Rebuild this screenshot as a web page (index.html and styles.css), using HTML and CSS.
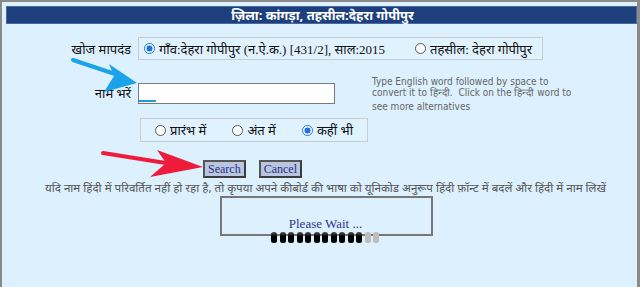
FILE: index.html
```html
<!DOCTYPE html>
<html lang="hi">
<head>
<meta charset="utf-8">
<title>नाम खोज</title>
<link rel="stylesheet" href="styles.css">
</head>
<body>
<div class="page">
  <div class="header">ज़िला: कांगड़ा, तहसील:देहरा गोपीपुर</div>
  <div class="form">
    <div class="row row1">
      <div class="label">खोज मापदंड</div>
      <div class="box box1">
        <label class="opt"><span class="radio on"></span>गाँव:देहरा गोपीपुर (न.ऐ.क.) [431/2], साल:2015</label>
        <label class="opt opt2"><span class="radio"></span>तहसील: देहरा गोपीपुर</label>
      </div>
    </div>
    <div class="row row2">
      <div class="label">नाम भरें</div>
      <div class="inputwrap"><div class="input"><span class="ime"></span></div></div>
      <div class="help">Type English word followed by space to<br>convert it to हिन्दी.&nbsp; Click on the हिन्दी word to<br><span class="l3">see more alternatives</span></div>
    </div>
    <div class="row row3">
      <div class="label"></div>
      <div class="box box3">
        <label class="opt"><span class="radio"></span>प्रारंभ में</label>
        <label class="opt"><span class="radio"></span>अंत में</label>
        <label class="opt"><span class="radio on"></span>कहीं भी</label>
      </div>
    </div>
    <div class="buttons">
      <button class="btn">Search</button>
      <button class="btn">Cancel</button>
    </div>
    <div class="note">यदि नाम हिंदी में परिवर्तित नहीं हो रहा है, तो कृपया अपने कीबोर्ड की भाषा को यूनिकोड अनुरूप हिंदी फ़ॉन्ट में बदलें और हिंदी में नाम लिखें</div>
    <div class="wait">
      <div class="waittext">Please Wait ...</div>
      <div class="progress">
        <i></i><i></i><i></i><i></i><i></i><i></i><i></i><i></i><i></i><i></i><i></i><i class="off"></i><i class="off"></i>
      </div>
    </div>
  </div>
  <svg class="arrows" width="640" height="287" viewBox="0 0 640 287">
    <line x1="73" y1="60" x2="118" y2="75" stroke="#1aa3e8" stroke-width="4" stroke-linecap="round"/>
    <polygon points="137,83 109,64 114,76 104,92" fill="#1aa3e8"/>
    <line x1="103" y1="153" x2="172" y2="164" stroke="#ee1c3a" stroke-width="4" stroke-linecap="round"/>
    <polygon points="203,167 157,150 166,163 150,177" fill="#ee1c3a"/>
  </svg>
</div>
</body>
</html>
```
FILE: styles.css
```css
html, body {
  margin: 0;
  padding: 0;
  background: #dcf0fe;
}
body {
  width: 640px;
  height: 287px;
  overflow: hidden;
}
.page {
  position: relative;
  box-sizing: border-box;
  width: 640px;
  height: 287px;
  border-top: 2px solid #8a8a8a;
  border-left: 2px solid #8a8a8a;
  border-right: 3px solid #8a8a8a;
  background: #dcf0fe;
  padding: 4px 0 0 4px;
  font-family: "Noto Sans", "DejaVu Sans", sans-serif;
}
.header {
  box-sizing: border-box;
  height: 18px;
  background: #1e3f7e;
  border: 1px solid #4a68a0;
  color: #ffffff;
  font-weight: bold;
  font-size: 13px;
  line-height: 16px;
  text-align: center;
  padding-left: 2px;
}
.form {
  display: flex;
  flex-direction: column;
}
.row {
  display: flex;
  align-items: center;
}
.label {
  width: 132px;
  text-align: right;
  font-size: 13px;
  color: #111;
  padding-right: 7px;
  box-sizing: border-box;
}
.box {
  display: flex;
  align-items: center;
  box-sizing: border-box;
  border: 1px solid #c5ccd4;
  background: #e0f2fe;
  font-family: "Liberation Serif", "Noto Sans", serif;
  font-size: 13px;
  color: #111;
}
.row1 { margin-top: 13px; }
.box1 {
  width: 405px;
  height: 23px;
  padding-left: 5px;
}
.opt {
  display: flex;
  align-items: center;
}
.opt2 { margin-left: auto; margin-right: 10px; }
.radio {
  box-sizing: border-box;
  width: 11px;
  height: 11px;
  border: 1px solid #555;
  border-radius: 50%;
  background: #fff;
  margin-right: 4px;
}
.radio.on {
  border-color: #1a73e8;
  background: radial-gradient(circle, #1a73e8 0 2.8px, #fff 3.3px);
}
.row2 {
  margin-top: 23px;
  align-items: flex-start;
}
.row2 .label { margin-top: 1px; }
.input {
  position: relative;
  box-sizing: border-box;
  width: 197px;
  height: 21px;
  background: #fff;
  border: 1px solid #7a7a7a;
}
.ime {
  position: absolute;
  left: 0;
  bottom: 1px;
  width: 17px;
  height: 2px;
  background: #1a9be6;
}
.help {
  margin-left: 37px;
  margin-top: -7px;
  font-family: "DejaVu Sans Condensed", "DejaVu Sans", sans-serif;
  font-stretch: condensed;
  font-size: 10px;
  line-height: 11px;
  color: #666;
}
.help .l3 { display: inline-block; margin-top: 3px; }
.row3 { margin-top: 6px; }
.row3 .label { width: 134px; }
.box3 {
  width: 228px;
  height: 24px;
  padding-left: 14px;
  gap: 26px;
  font-family: "Noto Sans", sans-serif;
}
.buttons {
  display: flex;
  gap: 13px;
  margin-top: 18px;
  padding-left: 197px;
}
.btn {
  box-sizing: border-box;
  height: 18px;
  padding: 0 3px;
  background: #b8c6de;
  border: 2px solid #3c3c3c;
  border-top-color: #555;
  border-left-color: #555;
  font-family: "Liberation Serif", serif;
  font-size: 12px;
  color: #2e2e8c;
  line-height: 14px;
}
.note {
  margin-top: 2px;
  text-align: center;
  font-size: 11.6px;
  color: #555;
  padding-left: 8px;
  white-space: nowrap;
}
.wait {
  position: relative;
  box-sizing: border-box;
  width: 213px;
  height: 40px;
  margin: 1px 0 0 214px;
  border: 2px solid #777;
  display: flex;
  align-items: flex-end;
  justify-content: center;
}
.waittext {
  font-family: "Liberation Serif", serif;
  font-size: 13px;
  color: #33338c;
  margin-bottom: 2px;
  padding-right: 2px;
}
.progress {
  position: absolute;
  left: 49px;
  top: 34px;
  display: flex;
  gap: 2.5px;
}
.progress i {
  display: block;
  width: 6px;
  height: 11px;
  border-radius: 2.5px;
  background: linear-gradient(#555, #000 40%, #000);
}
.progress i.off {
  background: #bdbdbd;
}
.arrows {
  position: absolute;
  left: -2px;
  top: -2px;
  pointer-events: none;
}
```
